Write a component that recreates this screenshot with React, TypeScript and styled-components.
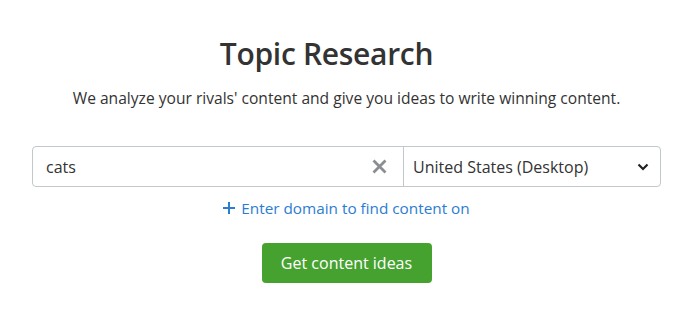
import styled, { createGlobalStyle } from "styled-components";

const GlobalStyle = createGlobalStyle`
  body {
    margin: 0;
    background: #ffffff;
    font-family: "Open Sans", "Noto Sans", sans-serif;
    color: #333333;
  }
`;

const Page = styled.div`
  display: flex;
  flex-direction: column;
  align-items: center;
  padding: 35px 32px 0;
`;

const Title = styled.h1`
  margin: 0 40px 0 0;
  font-size: 30px;
  line-height: 38px;
  font-weight: 600;
  letter-spacing: -0.3px;
  color: #333333;
`;

const Subtitle = styled.p`
  margin: 14px 0 0;
  font-size: 15.6px;
  line-height: 22px;
  color: #333333;
`;

const SearchRow = styled.div`
  margin-top: 37px;
  display: flex;
  width: 629px;
  height: 41px;
  border: 1px solid #c2c7cc;
  border-radius: 4px;
  box-sizing: border-box;
`;

const QueryBox = styled.div`
  flex: 0 0 371px;
  display: flex;
  align-items: center;
  padding: 0 13px;
  box-sizing: border-box;
  border-right: 1px solid #c2c7cc;
`;

const QueryText = styled.span`
  flex: 1;
  font-size: 16px;
  color: #333333;
`;

const ClearButton = styled.span`
  display: flex;
  align-items: center;
  justify-content: center;
  width: 16px;
  height: 16px;
  margin-right: 3px;
`;

const DatabaseSelect = styled.div`
  flex: 1;
  display: flex;
  align-items: center;
  justify-content: space-between;
  padding: 0 11px 0 9px;
`;

const SelectText = styled.span`
  font-size: 16px;
  color: #333333;
`;

const DomainLink = styled.a`
  margin-top: 10px;
  display: flex;
  align-items: center;
  gap: 6px;
  font-size: 15.3px;
  line-height: 22px;
  color: #2b7cd3;
  text-decoration: none;
  cursor: pointer;
`;

const PrimaryButton = styled.button`
  margin-top: 24px;
  width: 170px;
  height: 40px;
  border: none;
  border-radius: 4px;
  background: #46a22f;
  color: #ffffff;
  font-family: inherit;
  font-size: 16px;
  cursor: pointer;
`;

export default function App() {
  return (
    <>
      <GlobalStyle />
      <Page>
        <Title>Topic Research</Title>
        <Subtitle>
          We analyze your rivals' content and give you ideas to write winning content.
        </Subtitle>
        <SearchRow>
          <QueryBox>
            <QueryText>cats</QueryText>
            <ClearButton>
              <svg width="15" height="15" viewBox="0 0 15 15">
                <path d="M1.5 1.5 L13.5 13.5 M13.5 1.5 L1.5 13.5" stroke="#8a8d91" strokeWidth="2.8" />
              </svg>
            </ClearButton>
          </QueryBox>
          <DatabaseSelect>
            <SelectText>United States (Desktop)</SelectText>
            <svg width="12" height="8" viewBox="0 0 12 8">
              <path d="M1.5 1.5 L6 6 L10.5 1.5" stroke="#222" strokeWidth="2.2" fill="none" />
            </svg>
          </DatabaseSelect>
        </SearchRow>
        <DomainLink>
          <svg width="12" height="12" viewBox="0 0 12 12">
            <path d="M6 0 V12 M0 6 H12" stroke="#2b7cd3" strokeWidth="2" />
          </svg>
          Enter domain to find content on
        </DomainLink>
        <PrimaryButton>Get content ideas</PrimaryButton>
      </Page>
    </>
  );
}
